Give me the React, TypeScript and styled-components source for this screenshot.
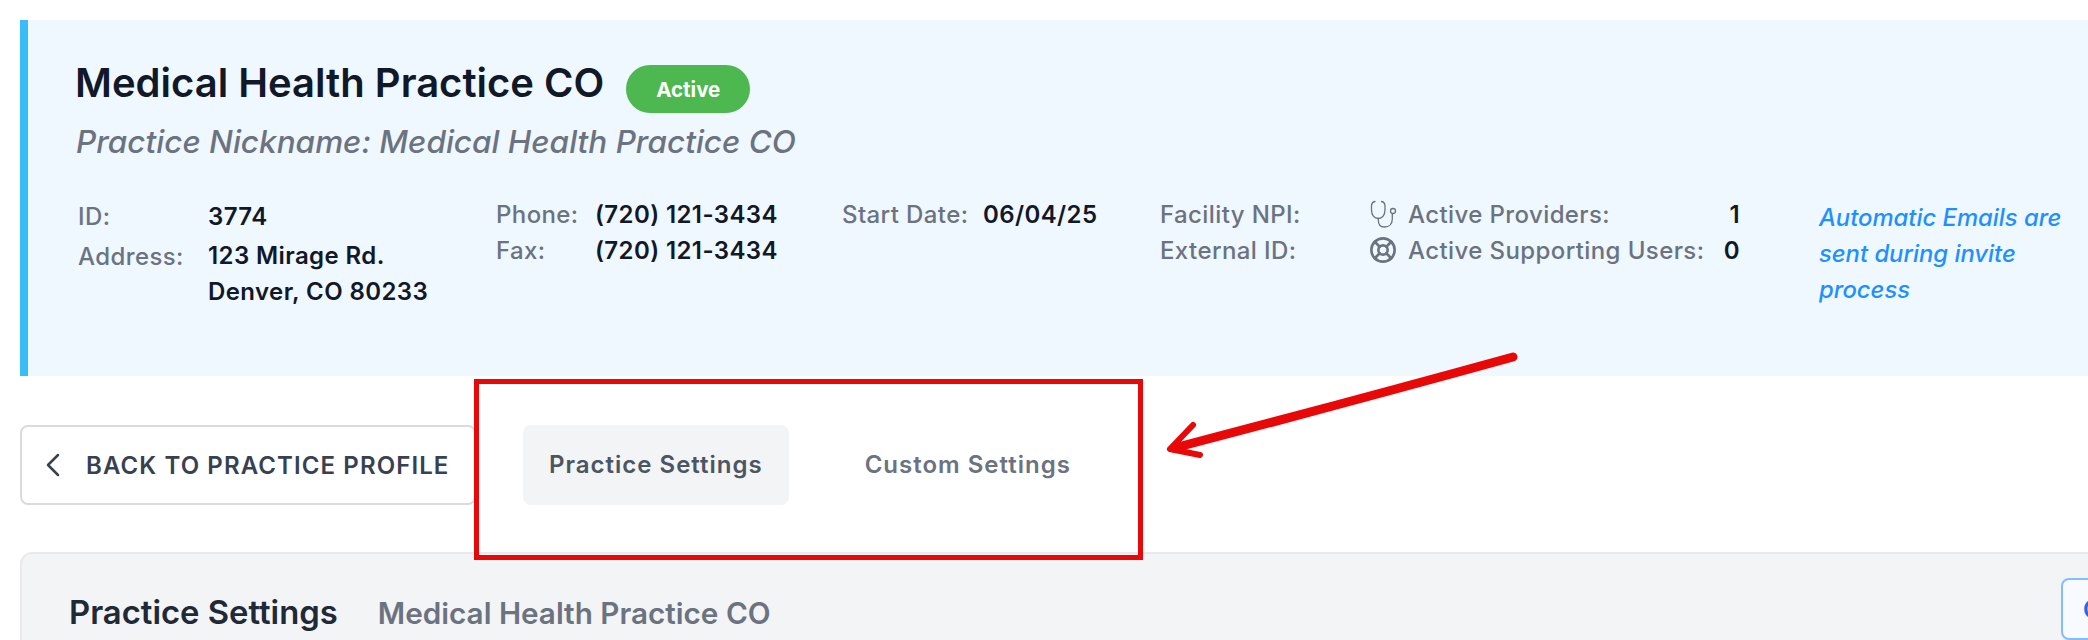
import React from 'react';
import styled, { createGlobalStyle } from 'styled-components';
import { ChevronLeft, LifeBuoy } from 'lucide-react';

const GlobalStyle = createGlobalStyle`
  html, body {
    margin: 0;
    background: #ffffff;
    overflow: hidden;
    font-family: Inter, "Liberation Sans", sans-serif;
  }
`;

const Page = styled.div`
  position: relative;
  width: 2200px;
  height: 640px;
  padding: 20px 0 0 20px;
  box-sizing: border-box;
  overflow: hidden;
`;

const Banner = styled.section`
  height: 356px;
  box-sizing: border-box;
  padding: 33px 48px 0 48px;
  background: #eff7ff;
  border-left: 8px solid #38bdf8;
`;

const TitleRow = styled.div`
  display: flex;
  align-items: flex-start;
  gap: 22px;
  height: 60px;
`;

const Title = styled.h1`
  margin: 0 0 0 -1px;
  font-size: 40px;
  line-height: 60px;
  font-weight: 600;
  color: #111827;
`;

const Badge = styled.span`
  display: flex;
  align-items: center;
  justify-content: center;
  width: 124px;
  height: 48px;
  margin-top: 12px;
  border-radius: 24px;
  background: #4cb84f;
  color: #ffffff;
  font-size: 20.5px;
  font-weight: 700;
`;

const Nickname = styled.div`
  margin-top: 10px;
  font-size: 31.5px;
  line-height: 38px;
  font-style: italic;
  font-weight: 500;
  color: #6b7280;
`;

const InfoRow = styled.div`
  display: flex;
  align-items: flex-start;
  margin-top: 35px;
`;

const InfoColumn = styled.div<{ $width: number; $labelWidth: number; $top?: number; $left?: number; $rowGap?: number }>`
  display: grid;
  grid-template-columns: ${({ $labelWidth }) => $labelWidth}px auto;
  grid-auto-rows: 36px;
  row-gap: ${({ $rowGap }) => $rowGap ?? 0}px;
  align-items: center;
  align-content: start;
  width: ${({ $width }) => $width}px;
  padding-top: ${({ $top }) => $top ?? 0}px;
  padding-left: ${({ $left }) => $left ?? 0}px;
  flex: none;
`;

const Label = styled.span`
  font-size: 24px;
  font-weight: 500;
  letter-spacing: 0.4px;
  color: #6b7280;
  white-space: nowrap;
`;

const Value = styled.span`
  font-size: 24px;
  font-weight: 600;
  color: #111827;
  letter-spacing: 0.4px;
  white-space: nowrap;
`;

const AddressValue = styled(Value)`
  grid-row: span 2;
  align-self: start;
  line-height: 36px;
`;

const Stats = styled.div`
  display: grid;
  grid-template-columns: 39px 316px 16px;
  grid-auto-rows: 36px;
  align-items: center;
  width: 450px;
  flex: none;
  color: #6b7280;
`;

const StatValue = styled(Value)`
  justify-self: end;
`;

const Note = styled.div`
  width: 260px;
  margin-top: 4px;
  font-size: 23.8px;
  font-style: italic;
  font-weight: 500;
  line-height: 36px;
  color: #1e90ff;
`;

const Toolbar = styled.div`
  display: flex;
  align-items: stretch;
  height: 80px;
  margin-top: 49px;
`;

const BackButton = styled.button`
  display: flex;
  align-items: center;
  gap: 13px;
  width: 456px;
  padding: 0 0 0 11px;
  box-sizing: border-box;
  background: #ffffff;
  border: 2px solid #d8dbe0;
  border-radius: 8px;
  color: #374151;
  font-family: inherit;
  font-size: 24px;
  font-weight: 600;
  letter-spacing: 1.1px;
  white-space: nowrap;
`;

const Tabs = styled.div`
  display: flex;
  gap: 50px;
  margin-left: 47px;
`;

const Tab = styled.div<{ $active?: boolean }>`
  display: flex;
  align-items: center;
  padding: 0 26px 2px;
  border-radius: 8px;
  background: ${({ $active }) => ($active ? '#f3f4f6' : 'transparent')};
  color: ${({ $active }) => ($active ? '#4b5563' : '#6b7280')};
  font-size: 24px;
  font-weight: 600;
  letter-spacing: 1px;
`;

const Panel = styled.section`
  display: flex;
  align-items: flex-start;
  height: 200px;
  margin-top: 47px;
  padding: 24px 0 0 48px;
  box-sizing: border-box;
  background: #f3f4f6;
  border: 2px solid #e9eaee;
  border-radius: 12px;
`;

const PanelTitles = styled.div`
  display: flex;
  align-items: baseline;
  gap: 40px;
  padding-top: 14px;
`;

const PanelTitle = styled.h2`
  margin: 0 0 0 -1px;
  font-size: 32.8px;
  font-weight: 600;
  color: #1f2937;
`;

const PanelSubtitle = styled.span`
  font-size: 29.7px;
  font-weight: 600;
  color: #6b7280;
`;

const PanelButton = styled.button`
  width: 137px;
  height: 62px;
  margin-left: auto;
  padding-left: 20px;
  background: #f7fbff;
  border: 2px solid #84bdff;
  border-radius: 8px;
  color: #2563eb;
  font-family: inherit;
  font-size: 24px;
  font-weight: 600;
  text-align: left;
`;

const Highlight = styled.div`
  position: absolute;
  left: 474px;
  top: 379px;
  width: 669px;
  height: 181px;
  box-sizing: border-box;
  border: 5px solid #e80808;
`;

const ArrowMark = styled.svg`
  position: absolute;
  left: 1150px;
  top: 340px;
`;

const StethoscopeIcon = () => (
  <svg width="28" height="30" viewBox="0 0 28 30" fill="none" stroke="#6b7280" strokeWidth="1.3" strokeLinecap="round">
    <path d="M6 2.5C3.5 3 2.5 4.5 2.5 7v4c0 5 2.8 8.5 6.8 8.5s6.7-3.5 6.7-8.5V7c0-2.500-1-4-3.500-4.500" />
    <path d="M9.300 19.500V21c0 4.500 2.500 7 6 7 5 0 8-3 8-8v-5" />
    <circle cx="24" cy="12" r="2.500" />
  </svg>
);

const App: React.FC = () => {
  return (
    <Page>
      <GlobalStyle />
      <Banner>
        <TitleRow>
          <Title>Medical Health Practice CO</Title>
          <Badge>Active</Badge>
        </TitleRow>
        <Nickname>Practice Nickname: Medical Health Practice CO</Nickname>
        <InfoRow>
          <InfoColumn $width={418} $labelWidth={130} $top={2} $left={2} $rowGap={4}>
            <Label>ID:</Label>
            <Value>3774</Value>
            <Label>Address:</Label>
            <AddressValue>
              123 Mirage Rd.
              <br />
              Denver, CO 80233
            </AddressValue>
          </InfoColumn>
          <InfoColumn $width={346} $labelWidth={99}>
            <Label>Phone:</Label>
            <Value>(720) 121-3434</Value>
            <Label>Fax:</Label>
            <Value>(720) 121-3434</Value>
          </InfoColumn>
          <InfoColumn $width={318} $labelWidth={141}>
            <Label>Start Date:</Label>
            <Value>06/04/25</Value>
          </InfoColumn>
          <InfoColumn $width={209} $labelWidth={209}>
            <Label>Facility NPI:</Label>
            <span />
            <Label>External ID:</Label>
            <span />
          </InfoColumn>
          <Stats>
            <StethoscopeIcon />
            <Label>Active Providers:</Label>
            <StatValue>1</StatValue>
            <LifeBuoy size={28} strokeWidth={2.25} />
            <Label>Active Supporting Users:</Label>
            <StatValue>0</StatValue>
          </Stats>
          <Note>Automatic Emails are sent during invite process</Note>
        </InfoRow>
      </Banner>
      <Toolbar>
        <BackButton>
          <ChevronLeft size={40} strokeWidth={1.5} />
          BACK TO PRACTICE PROFILE
        </BackButton>
        <Tabs>
          <Tab $active>Practice Settings</Tab>
          <Tab>Custom Settings</Tab>
        </Tabs>
      </Toolbar>
      <Panel>
        <PanelTitles>
          <PanelTitle>Practice Settings</PanelTitle>
          <PanelSubtitle>Medical Health Practice CO</PanelSubtitle>
        </PanelTitles>
        <PanelButton>C</PanelButton>
      </Panel>
      <Highlight />
      <ArrowMark width="380" height="130" viewBox="0 0 380 130">
        <path
          d="M363 17 Q200 62 24 108"
          fill="none"
          stroke="#e80808"
          strokeWidth="9"
          strokeLinecap="round"
        />
        <path
          d="M43 85 L20 109 L50 115"
          fill="none"
          stroke="#e80808"
          strokeWidth="6"
          strokeLinecap="round"
          strokeLinejoin="round"
        />
      </ArrowMark>
    </Page>
  );
};

export default App;
